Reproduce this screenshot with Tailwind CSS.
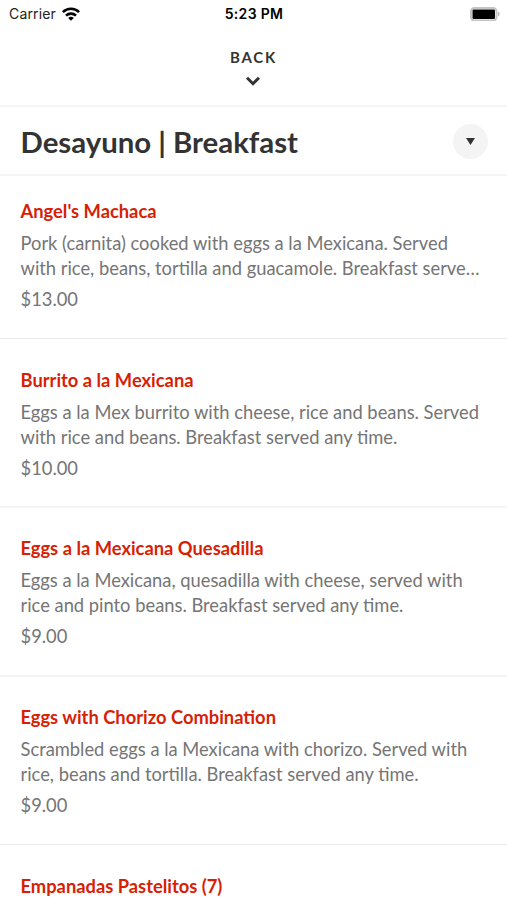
<!DOCTYPE html>
<html lang="en">
<head>
  <meta charset="UTF-8">
  <meta name="viewport" content="width=device-width, initial-scale=1.0">
  <title>Desayuno | Breakfast</title>
  <script src="https://cdn.jsdelivr.net/npm/@tailwindcss/browser@4"></script>
</head>
<body class="bg-white h-[900px] overflow-hidden font-['Lato',sans-serif]">
  <!-- Status bar -->
  <div class="h-[27px] pl-[9px] pr-[7px] grid grid-cols-3 items-center font-['Inter',sans-serif] text-[14px] text-[#222]">
    <div class="flex items-center gap-1.5">
      <span class="tracking-[0.15px]">Carrier</span>
      <svg class="w-[18px] h-[14px]" viewBox="0 0 18 14" fill="none" stroke="#000" stroke-width="2.6">
        <path d="M.9 5.2a11.4 11.4 0 0 1 16.2 0"/>
        <path d="M4 8.6a7.2 7.2 0 0 1 10 0"/>
        <path d="M9 13.8 6.2 11a4.1 4.1 0 0 1 5.6 0z" fill="#000" stroke="none"/>
      </svg>
    </div>
    <span class="pr-px text-center font-semibold text-black tracking-[0.3px]">5:23 PM</span>
    <svg class="w-[30px] h-[14px] justify-self-end" viewBox="0 0 30 14">
      <rect x="1" y="1" width="25.5" height="12.5" rx="3.5" fill="#fff" stroke="#c4c4c4" stroke-width="2"/>
      <rect x="2.5" y="2.5" width="22.5" height="9.5" rx="1.2" fill="#000"/>
      <path d="M28 4.5v5c2.2-.8 2.2-4.2 0-5z" fill="#bbb"/>
    </svg>
  </div>

  <!-- Back -->
  <button class="w-full h-[80px] pt-5 flex flex-col items-center border-b-2 border-[#f4f4f4] text-[#333]">
    <span class="text-[15px] leading-5 font-bold tracking-[1.7px]">BACK</span>
    <svg class="mt-[9px] mr-0.5 w-[14px] h-[10px]" viewBox="0 0 14 10" fill="none" stroke="#333" stroke-width="3">
      <path d="M1 1.7l6 6 6-6"/>
    </svg>
  </button>

  <!-- Category -->
  <div class="h-[69px] pt-0.5 pl-[20.5px] pr-[19px] flex items-center justify-between border-b-2 border-[#f4f4f4]">
    <h1 class="pt-0.5 text-[29.35px] font-bold text-[#333]">Desayuno | Breakfast</h1>
    <button class="size-[35px] rounded-full bg-[#f4f4f4] flex items-center justify-center">
      <svg class="w-[9px] h-[7px]" viewBox="0 0 9 7"><path d="M0 0h9L4.5 7z" fill="#333"/></svg>
    </button>
  </div>

  <!-- Menu items -->
  <ul class="text-[18.34px] leading-[25px] text-[#757575]">
    <li class="h-[163px] px-[20.5px] pt-[23px] border-b border-[#ebebeb]">
      <h2 class="font-bold text-[#d81e05]">Angel's Machaca</h2>
      <p class="mt-[7px] whitespace-nowrap">Pork (carnita) cooked with eggs a la Mexicana. Served<br>with rice, beans, tortilla and guacamole. Breakfast serve…</p>
      <p class="mt-1.5">$13.00</p>
    </li>
    <li class="h-[169px] px-[20.5px] pt-[29px] border-b-2 border-[#f5f5f5]">
      <h2 class="font-bold text-[#d81e05]">Burrito a la Mexicana</h2>
      <p class="mt-[7px] whitespace-nowrap">Eggs a la Mex burrito with cheese, rice and beans. Served<br>with rice and beans. Breakfast served any time.</p>
      <p class="mt-1.5">$10.00</p>
    </li>
    <li class="h-[169px] px-[20.5px] pt-[28px] border-b-2 border-[#f5f5f5]">
      <h2 class="font-bold text-[#d81e05]">Eggs a la Mexicana Quesadilla</h2>
      <p class="mt-[7px] whitespace-nowrap">Eggs a la Mexicana, quesadilla with cheese, served with<br>rice and pinto beans. Breakfast served any time.</p>
      <p class="mt-1.5">$9.00</p>
    </li>
    <li class="h-[168px] px-[20.5px] pt-[28px] border-b border-[#ebebeb]">
      <h2 class="font-bold text-[#d81e05]">Eggs with Chorizo Combination</h2>
      <p class="mt-[7px] whitespace-nowrap">Scrambled eggs a la Mexicana with chorizo. Served with<br>rice, beans and tortilla. Breakfast served any time.</p>
      <p class="mt-1.5">$9.00</p>
    </li>
    <li class="px-[20.5px] pt-[29px]">
      <h2 class="font-bold text-[#d81e05]">Empanadas Pastelitos (7)</h2>
    </li>
  </ul>
</body>
</html>
